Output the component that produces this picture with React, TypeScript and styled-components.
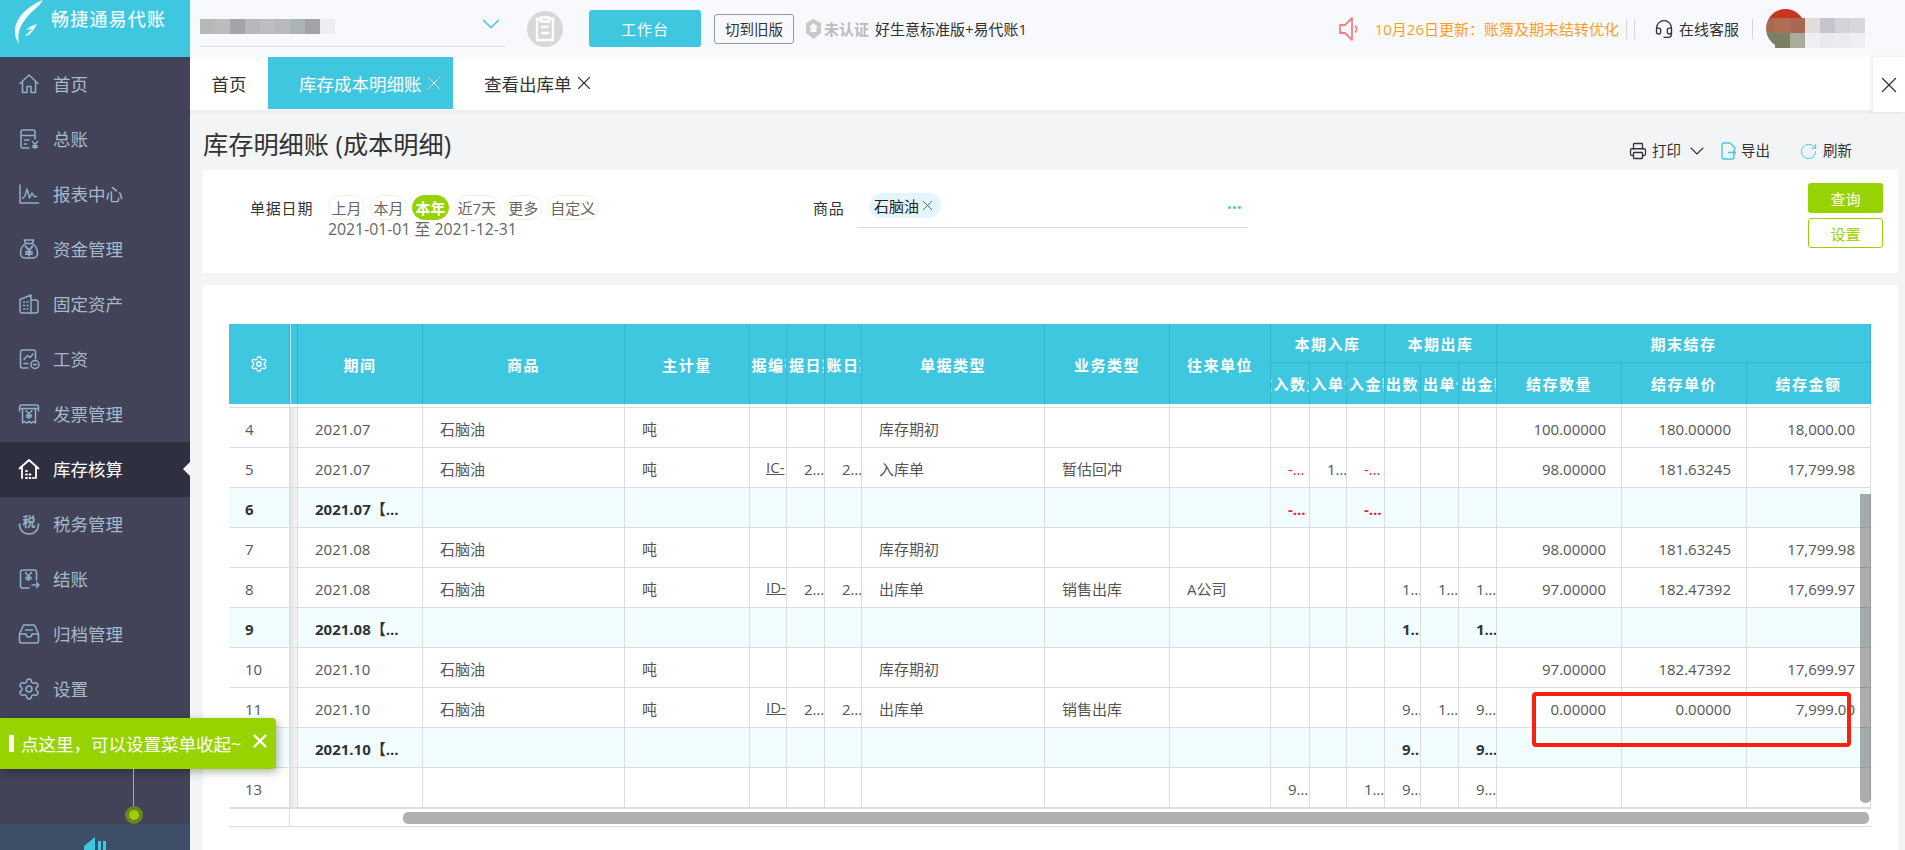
import React from "react";
import styled, { createGlobalStyle } from "styled-components";
import { Settings, X, ChevronDown, Printer, RotateCw, Headset } from "lucide-react";

const FONT = `"Open Sans", "Noto Sans CJK SC", "Noto Sans", sans-serif`;
const TEAL = "#3ec7df";
const GREEN = "#97d300";
const COLS = "61px 8px 125px 202px 125px 37px 38px 37px 183px 125px 101px 39px 37px 38px 36px 38px 38px 125px 125px 124px";

const Global = createGlobalStyle`
  html, body { margin: 0; padding: 0; background: #f2f4f6; overflow: hidden; }
  body { font-family: ${FONT}; color: #333; }
  * { box-sizing: border-box; }
`;

const Shell = styled.div`position: relative; display: flex; width: 1905px; height: 850px; overflow: hidden;`;
const Sidebar = styled.aside`width: 190px; height: 850px; flex: none; display: flex; flex-direction: column; background: #424358;`;
const LogoBar = styled.div`height: 57px; flex: none; background: ${TEAL}; display: flex; padding: 0 0 0 11px; color: #fff; overflow: hidden;`;
const LogoText = styled.span`font-size: 18px; font-weight: 500; letter-spacing: 1.2px; line-height: 39px; margin-left: 6px; white-space: nowrap; color: #eafaff;`;
const Menu = styled.nav`flex: 1; display: flex; flex-direction: column;`;
const MenuItem = styled.div<{ $active?: boolean }>`
  position: relative; height: 55px; flex: none; display: flex; align-items: center; gap: 12px; padding: 0 0 2px 17px;
  font-size: 17.5px; background: ${(p) => (p.$active ? "#2e303f" : "transparent")}; color: ${(p) => (p.$active ? "#fff" : "#a6bac8")};
  svg { color: ${(p) => (p.$active ? "#fff" : "#8fb0c8")}; }
`;
const ActiveArrow = styled.i`position: absolute; right: 0; top: 20px; border: 7px solid transparent; border-right-color: #f2f4f6; border-left-width: 0;`;
const CollapseBar = styled.div`height: 26px; flex: none; background: #3e4e66; display: flex; justify-content: center; overflow: hidden; padding: 13px 0 0 0;`;

const Main = styled.main`flex: 1; min-width: 0; display: flex; flex-direction: column;`;
const TopBar = styled.header`height: 57px; flex: none; background: #f8f9fd; display: flex; align-items: center; padding: 0 40px 0 10px;`;
const Select = styled.div`position: relative; width: 306px; height: 47px; align-self: flex-start; border-bottom: 1px solid #ddd; display: flex; padding-top: 19px;`;
const MosaicCell = styled.i<{ $c: string }>`display: block; width: 15px; height: 15px; background: ${(p) => p.$c};`;
const SelectChevron = styled.span`position: absolute; right: 0; top: 9px; color: ${TEAL}; display: flex;`;
const RoundIcon = styled.span`width: 36px; height: 36px; border-radius: 50%; background: #d8d8d8; margin-left: 21px; display: flex; align-items: center; justify-content: center; flex: none;`;
const BenchButton = styled.button`width: 112px; height: 37px; margin-left: 26px; border: 0; border-radius: 3px; background: ${TEAL}; color: #fff; font: 15px ${FONT}; letter-spacing: 1px; flex: none;`;
const OldButton = styled.button`width: 80px; height: 30px; margin-left: 13px; border: 1px solid #999; border-radius: 3px; background: transparent; color: #333; font: 14.5px ${FONT}; padding: 0; flex: none;`;
const Cert = styled.span`margin-left: 12px; display: flex; align-items: center; gap: 3px; color: #bcbcbc; font-size: 15px; font-weight: 700;`;
const Plan = styled.span`margin-left: 6px; font-size: 15px; color: #333; white-space: nowrap;`;
const TopRight = styled.div`margin-left: auto; display: flex; align-items: center;`;
const Notice = styled.span`margin-left: 16px; font-size: 15px; color: #ff9d1e; white-space: nowrap;`;
const VRule = styled.i<{ $gap: number }>`display: block; width: 1px; height: 20px; background: #d4d6da; margin-left: ${(p) => p.$gap}px;`;
const HeadsetSlot = styled.span`margin-left: 19px; display: flex;`;
const ServiceText = styled.span`margin-left: 5px; font-size: 15px; color: #333; white-space: nowrap;`;
const Avatar = styled.div`position: relative; width: 99px; height: 39px; margin-left: 13px;`;
const AvatarDisc = styled.div`width: 39px; height: 39px; border-radius: 50%; background: linear-gradient(#c8341f 0 22%, #a56a50 22% 58%, #7b7f64 58%);`;
const AvatarMosaic = styled.div`position: absolute; left: 9px; top: 9px; display: grid; grid-template-columns: repeat(6, 15px); grid-auto-rows: 15px;`;

const Tabs = styled.div`height: 56px; flex: none; background: #fff; display: flex; align-items: flex-start; border-bottom: 3px solid #eceef0;`;
const HomeTab = styled.div`width: 78px; height: 52px; display: flex; align-items: center; justify-content: center; font-size: 17.5px; color: #333;`;
const Tab = styled.div<{ $active?: boolean }>`
  height: 52px; display: flex; align-items: center; gap: 1px; font-size: 17.5px; white-space: nowrap;
  width: ${(p) => (p.$active ? "185px" : "auto")}; padding-left: 31px;
  background: ${(p) => (p.$active ? TEAL : "transparent")}; color: ${(p) => (p.$active ? "#fff" : "#333")};
`;
const CloseBox = styled.div`margin-left: auto; width: 32px; height: 55px; background: #fff; box-shadow: -2px 0 4px rgba(0, 0, 0, 0.08); display: flex; align-items: center; justify-content: center; position: relative; z-index: 1;`;

const Page = styled.div`flex: 1; min-height: 0; padding: 0 7px 0 13px; display: flex; flex-direction: column;`;
const TitleRow = styled.div`height: 57px; flex: none; display: flex; align-items: flex-start; padding-right: 46px;`;
const Title = styled.h1`margin: 14px 0 0; font-size: 25.2px; font-weight: 400; line-height: 34px; color: #333; white-space: nowrap;`;
const Tools = styled.div`margin-left: auto; margin-top: 26px; display: flex; align-items: center; font-size: 14.5px; color: #333; line-height: 22px;`;
const Tool = styled.span<{ $gap: number }>`display: flex; align-items: center; gap: 5px; margin-left: ${(p) => p.$gap}px; svg { flex: none; }`;

const FilterPanel = styled.section`height: 103px; flex: none; background: #fff; display: flex; align-items: flex-start;`;
const DateGroup = styled.div`width: 610px; flex: none; padding: 25px 0 0 47px; display: flex;`;
const FieldLabel = styled.label<{ $w: number }>`width: ${(p) => p.$w}px; flex: none; font-size: 15px; letter-spacing: 0.8px; line-height: 26px; color: #333;`;
const DateBody = styled.div`display: flex; flex-direction: column;`;
const Pills = styled.div`display: flex; gap: 5px;`;
const Pill = styled.span<{ $on?: boolean }>`
  height: 25px; padding: 0 2.5px; border-radius: 13px; font-size: 15px; line-height: 24px; white-space: nowrap;
  border: 1px solid ${(p) => (p.$on ? GREEN : "#eef3e0")};
  background: ${(p) => (p.$on ? GREEN : "#fff")}; color: ${(p) => (p.$on ? "#fff" : "#666")};
  font-weight: ${(p) => (p.$on ? 700 : 400)};
`;
const DateText = styled.span`font-size: 15.8px; line-height: 18px; color: #666; white-space: nowrap;`;
const ProductGroup = styled.div`display: flex; padding-top: 25px;`;
const ProductBox = styled.div`width: 391px; height: 35px; margin-top: -2px; border-bottom: 1px solid #ddd; display: flex; align-items: flex-start; justify-content: space-between; padding: 0 7px 0 12px;`;
const Tag = styled.span`height: 25px; width: 72px; border-radius: 13px; background: #e2f6fb; color: #222; font-size: 15px; line-height: 24px; display: flex; align-items: center; gap: 0; padding-left: 5px; white-space: nowrap;`;
const Dots = styled.span`display: flex; gap: 2px; margin-top: 13px; i { display: block; width: 3px; height: 3px; border-radius: 50%; background: ${TEAL}; }`;
const ActionCol = styled.div`margin-left: auto; padding: 13px 15px 0 0; display: flex; flex-direction: column; gap: 5px;`;
const QueryButton = styled.button`width: 75px; height: 30px; border: 0; border-radius: 3px; background: ${GREEN}; color: #fff; font: 15px ${FONT}; padding: 0;`;
const SetButton = styled.button`width: 75px; height: 30px; border: 1px solid ${GREEN}; border-radius: 3px; background: #fff; color: ${GREEN}; font: 15px ${FONT}; padding: 0;`;

const TablePanel = styled.section`flex: 1; min-height: 0; margin-top: 12px; background: #fff; padding: 39px 0 0 26px;`;
const TableWrap = styled.div`position: relative; width: 1642px; font-size: 15px; color: #555;`;
const HeadGrid = styled.div`display: grid; grid-template-columns: ${COLS}; grid-template-rows: 39px 41px; height: 80px; background: ${TEAL}; color: #fff;`;
const HeadCell = styled.div<{ $tall?: boolean; $group?: boolean }>`
  display: flex; align-items: center; justify-content: center; overflow: hidden; white-space: nowrap;
  font-size: 15px; font-weight: 700; letter-spacing: 1.5px;
  border-right: 1px solid rgba(0, 90, 110, 0.16);
  ${(p) => (p.$tall ? "grid-row: span 2;" : "")}
  ${(p) => (p.$group ? "grid-column: span 3; border-bottom: 1px solid rgba(0, 90, 110, 0.16);" : "")}
`;
const HeadShade = styled.div`grid-row: span 2; border-left: 1px solid #b7e6ef; border-right: 1px solid rgba(0, 90, 110, 0.2);`;
const Row = styled.div<{ $sum?: boolean }>`
  display: grid; grid-template-columns: ${COLS}; height: 40px; border-bottom: 1px solid #dddddd;
  background: ${(p) => (p.$sum ? "#f1fdff" : "#fff")}; font-weight: ${(p) => (p.$sum ? 700 : 400)};
  color: ${(p) => (p.$sum ? "#333" : "#555")};
`;
const GapRow = styled(Row)`height: 4px;`;
const Cell = styled.div<{ $kind?: "wide" | "narrow" | "num" | "id"; $red?: boolean }>`
  height: 39px; line-height: 43px; white-space: nowrap; overflow: hidden; text-overflow: ellipsis; border-right: 1px solid #dddddd; min-width: 0;
  color: ${(p) => (p.$red ? "#f5222d" : "inherit")};
  padding: ${(p) => (p.$kind === "num" ? "0 15px 0 0" : p.$kind === "narrow" ? "0 0 0 17px" : p.$kind === "id" ? "0 0 0 16px" : "0 17px")};
  text-align: ${(p) => (p.$kind === "num" ? "right" : "left")};
  ${(p) => (p.$kind === "id" ? "text-overflow: clip; line-height: 39px;" : "")}
  a { color: inherit; text-decoration: underline; }
`;
const RowNo = styled.div`height: 39px; line-height: 43px; padding-left: 16px; border-right: 1px solid #ddd;`;
const Shade = styled.div`height: 100%; border-right: 1px solid #ddd; background: linear-gradient(to right, #e3e3e3, #f6f6f6);`;
const TableFoot = styled.div`display: grid; grid-template-columns: 61px 1fr; height: 19px; border-top: 1px solid #ddd; border-bottom: 1px solid #ddd; position: relative;`;
const FootCell = styled.div`border-right: 1px solid #ddd;`;
const HScroll = styled.div`position: absolute; left: 174px; right: 2px; top: 3px; height: 12px; border-radius: 5px; background: #b0b0b0;`;
const VScroll = styled.div`position: absolute; right: 0; top: 170px; width: 11px; height: 309px; border-radius: 0 0 5px 5px; background: rgba(0, 0, 0, 0.32);`;
const RedMark = styled.div`position: absolute; left: 1303px; top: 368px; width: 319px; height: 55px; border: 4px solid #fa2010; border-radius: 4px; pointer-events: none;`;

const Guide = styled.div`position: absolute; left: 0; top: 718px; width: 276px; height: 51px; background: ${GREEN}; border-radius: 0 4px 4px 0; box-shadow: 2px 3px 9px rgba(0, 0, 0, 0.3); color: #fff; display: flex; align-items: center; padding-left: 9px; z-index: 5;`;
const GuideMark = styled.i`display: block; width: 5px; height: 17px; background: #fff; margin-right: 7px;`;
const GuideText = styled.span`font-size: 17.5px; white-space: nowrap;`;
const GuideClose = styled.span`position: absolute; left: 249px; top: 12px; display: flex;`;
const GuideStem = styled.i`position: absolute; left: 133px; top: 51px; width: 1px; height: 37px; background: ${GREEN};`;
const GuideDot = styled.i`position: absolute; left: 125px; top: 88px; width: 18px; height: 18px; border-radius: 50%; background: ${GREEN}; border: 4px solid #6b8420;`;

const Ic = ({ children, size = 24, sw = 1.5 }: { children: React.ReactNode; size?: number; sw?: number }) => (
  <svg width={size} height={size} viewBox="0 0 24 24" fill="none" stroke="currentColor" strokeWidth={sw} strokeLinecap="round" strokeLinejoin="round">
    {children}
  </svg>
);

const Yen = ({ x, y, s = 1 }: { x: number; y: number; s?: number }) => (
  <path transform={`translate(${x} ${y}) scale(${s})`} d="M-3 -4 L0 -0.5 L3 -4 M0 -0.5 V4 M-2.6 0.8 H2.6 M-2.6 2.6 H2.6" />
);

const icons: Record<string, React.ReactNode> = {
  home: <Ic><path d="M3 11.5 12 3l9 8.5M5.5 10v10.5h4.5V14.5h4v6h4.5V10" /></Ic>,
  ledger: <Ic><path d="M12 21H6a2 2 0 0 1-2-2V5a2 2 0 0 1 2-2h10a2 2 0 0 1 2 2v7M4 8.5h14M7.5 13H12M7.5 17h2" /><Yen x={18} y={18} s={0.9} /></Ic>,
  report: <Ic><path d="M3 3v18h18.5M5.5 16.5 8 14l2-7 2.5 9 2.5-5 2 3.5 2.5 0" /></Ic>,
  bag: <Ic><path d="M8.5 6.5 7.5 3h9l-1 3.5M8.5 6.5h7M8.5 6.5C5 9 3.5 12.5 3.5 16c0 3.5 2 5 5 5h7c3 0 5-1.5 5-5 0-3.5-1.5-7-5-9.5" /><Yen x={12} y={14} s={1.2} /></Ic>,
  assets: <Ic><path d="M3 7.5 14 3v18H5a2 2 0 0 1-2-2zM14 8h5a2 2 0 0 1 2 2v9a2 2 0 0 1-2 2h-5M6.5 10h1M10 10h1M6.5 13.5h1M10 13.5h1M6.5 17h1M10 17h1" /></Ic>,
  wages: <Ic><path d="M11 21H5.5a2 2 0 0 1-2-2V5a2 2 0 0 1 2-2h11a2 2 0 0 1 2 2v7M7 12.5l3.5-4 2.5 2 3-3.5M7 16.5h4" /><circle cx="18" cy="17.5" r="4" /><path d="M16.5 17.5h3" /></Ic>,
  invoice: <Ic><path d="M2.5 9V5a2 2 0 0 1 2-2h15a2 2 0 0 1 2 2v4M2.5 6.5h19M5.5 7v14l2-1.5 2 1.5 2.5-1.5 2.5 1.5 2-1.5 2 1.5V7" /><Yen x={12} y={12.5} s={1} /></Ic>,
  stock: <Ic sw={1.8}><path d="M2.5 11.5 12 3l9.5 8.5M5 10v11M19 10v11M9 14h1M9 17.5h1M12.5 17.5h1M9 21h1M12.5 21h1M16 21h1" /></Ic>,
  tax: (
    <svg width="24" height="24" viewBox="0 0 24 24" fill="none" stroke="currentColor" strokeWidth="1.6" strokeLinecap="round">
      <text x="12" y="14" textAnchor="middle" fontSize="13" fontWeight="700" fill="currentColor" stroke="none" fontFamily="Noto Sans CJK SC">税</text>
      <path d="M2.5 12c0 6 4 10 9.5 10s9.5-4 9.5-10" />
    </svg>
  ),
  close: <Ic><path d="M12 21H5.5a2 2 0 0 1-2-2V5a2 2 0 0 1 2-2h12a2 2 0 0 1 2 2v8M15 18h7M19.5 15.5 22 18l-2.5 2.5" /><Yen x={11.5} y={9.5} s={1} /></Ic>,
  archive: <Ic><path d="M6.5 3h11l4 9v7a2 2 0 0 1-2 2h-15a2 2 0 0 1-2-2v-7zM2.5 12h6.500a3 3 0 0 0 6 0h6.500M8.5 8h7" /></Ic>,
  settings: <Settings size={24} strokeWidth={1.5} />,
};

const menu: [string, string][] = [
  ["首页", "home"], ["总账", "ledger"], ["报表中心", "report"], ["资金管理", "bag"], ["固定资产", "assets"], ["工资", "wages"],
  ["发票管理", "invoice"], ["库存核算", "stock"], ["税务管理", "tax"], ["结账", "close"], ["归档管理", "archive"], ["设置", "settings"],
];

const selectMosaic = ["#b8b8b8", "#bcbcbc", "#a5a3a8", "#b8b8bb", "#bdbdc0", "#b9b8bf", "#a9b4b3", "#a3a2a8", "#eeeef2"];
const avatarMosaic = ["#b06f55", "#a66a54", "#e2ddd9", "#c5c5d0", "#d5d3d8", "#d8d8dc", "#7b7f64", "#a9ab9c", "#efeef0", "#e9e9ef", "#ecebf0", "#efeff3"];

type RowData = {
  n: number; sum?: boolean; period?: string; item?: string; doc?: string; date?: string; type?: string; biz?: string; party?: string;
  inQ?: string; inP?: string; inA?: string; outQ?: string; outP?: string; outA?: string; q?: string; p?: string; a?: string; red?: boolean;
};

const rows: RowData[] = [
  { n: 4, period: "2021.07", item: "石脑油", type: "库存期初", q: "100.00000", p: "180.00000", a: "18,000.00" },
  { n: 5, period: "2021.07", item: "石脑油", doc: "IC-", date: "2021-07-31", type: "入库单", biz: "暂估回冲", inQ: "-2.00000", inP: "100.00000", inA: "-200.02", q: "98.00000", p: "181.63245", a: "17,799.98", red: true },
  { n: 6, sum: true, period: "2021.07【小计】", inQ: "-2.00000", inA: "-200.02", red: true },
  { n: 7, period: "2021.08", item: "石脑油", type: "库存期初", q: "98.00000", p: "181.63245", a: "17,799.98" },
  { n: 8, period: "2021.08", item: "石脑油", doc: "ID-", date: "2021-08-31", type: "出库单", biz: "销售出库", party: "A公司", outQ: "1.00000", outP: "100.01", outA: "100.01", q: "97.00000", p: "182.47392", a: "17,699.97" },
  { n: 9, sum: true, period: "2021.08【小计】", outQ: "1.00000", outA: "100.01" },
  { n: 10, period: "2021.10", item: "石脑油", type: "库存期初", q: "97.00000", p: "182.47392", a: "17,699.97" },
  { n: 11, period: "2021.10", item: "石脑油", doc: "ID-", date: "2021-10-31", type: "出库单", biz: "销售出库", outQ: "97.00000", outP: "100.00", outA: "9,700.97", q: "0.00000", p: "0.00000", a: "7,999.00" },
  { n: 12, sum: true, period: "2021.10【小计】", outQ: "97.00000", outA: "9,700.97" },
  { n: 13, inQ: "98.00000", inA: "18,000.00", outQ: "98.00000", outA: "9,800.98" },
];

const subHeads = ["收入数量", "收入单价", "收入金额", "发出数量", "发出单价", "发出金额", "结存数量", "结存单价", "结存金额"];

const TableRow = ({ r }: { r: RowData }) => (
  <Row $sum={r.sum}>
    <RowNo>{r.n}</RowNo>
    <Shade />
    <Cell $kind="wide">{r.period}</Cell>
    <Cell $kind="wide">{r.item}</Cell>
    <Cell $kind="wide">{r.item ? "吨" : ""}</Cell>
    <Cell $kind="id">{r.doc ? <a>{r.doc}</a> : null}</Cell>
    <Cell $kind="narrow">{r.date}</Cell>
    <Cell $kind="narrow">{r.date}</Cell>
    <Cell $kind="wide">{r.type}</Cell>
    <Cell $kind="wide">{r.biz}</Cell>
    <Cell $kind="wide">{r.party}</Cell>
    <Cell $kind="narrow" $red={r.red}>{r.inQ}</Cell>
    <Cell $kind="narrow">{r.inP}</Cell>
    <Cell $kind="narrow" $red={r.red}>{r.inA}</Cell>
    <Cell $kind="narrow">{r.outQ}</Cell>
    <Cell $kind="narrow">{r.outP}</Cell>
    <Cell $kind="narrow">{r.outA}</Cell>
    <Cell $kind="num">{r.q}</Cell>
    <Cell $kind="num">{r.p}</Cell>
    <Cell $kind="num">{r.a}</Cell>
  </Row>
);

const EmptyRow = () => (
  <GapRow>
    {COLS.split(" ").map((_, i) => (
      <FootCell key={i} />
    ))}
  </GapRow>
);

export default function App() {
  return (
    <Shell>
      <Global />
      <Sidebar>
        <LogoBar>
          <svg width="34" height="44" viewBox="0 0 34 44" fill="#fff">
            <path d="M32 0C24 3 14 9 8 18 3 26 2 35 8 44 6 34 9 26 14 20 20 13 27 8 32 0Z" opacity="0.95" />
            <path d="M28 6C21 11 15 17 12 24c4-3 10-8 16-18Z" fill={TEAL} />
            <path d="M26 24c-4 1-8 3-11 6l6-1-7 7 4-1c3-3 6-7 8-11Z" opacity="0.9" />
          </svg>
          <LogoText>畅捷通易代账</LogoText>
        </LogoBar>
        <Menu>
          {menu.map(([label, key]) => (
            <MenuItem key={key} $active={key === "stock"}>
              {icons[key]}
              <span>{label}</span>
              {key === "stock" && <ActiveArrow />}
            </MenuItem>
          ))}
        </Menu>
        <CollapseBar>
          <svg width="22" height="13" viewBox="0 0 22 13" fill={TEAL}>
            <path d="M11 0v13H0l0-4z" />
            <rect x="14" y="4" width="3" height="9" />
            <rect x="19" y="4" width="3" height="9" />
          </svg>
        </CollapseBar>
      </Sidebar>

      <Main>
        <TopBar>
          <Select>
            {selectMosaic.map((c, i) => (
              <MosaicCell key={i} $c={c} />
            ))}
            <SelectChevron><ChevronDown size={30} strokeWidth={1.2} /></SelectChevron>
          </Select>
          <RoundIcon>
            <svg width="24" height="26" viewBox="0 0 24 26" fill="none" stroke="#fff" strokeWidth="2.4">
              <path d="M8 3H4v21h16V3h-4" />
              <path d="M8 1.5h8v4H8zM8 11h8M8 17h8" />
            </svg>
          </RoundIcon>
          <BenchButton>工作台</BenchButton>
          <OldButton>切到旧版</OldButton>
          <Cert>
            <svg width="15" height="20" viewBox="0 0 15 20" fill="#c8c8c8">
              <path d="M7.5 0 15 4v10l-7.5 6L0 14V4z" />
              <path d="M7.5 4 3 8h1.5v5h6V8H12z" fill="#f8f9fd" />
            </svg>
            未认证
          </Cert>
          <Plan>好生意标准版+易代账1</Plan>
          <TopRight>
            <svg width="20" height="24" viewBox="0 0 20 24" fill="none" stroke="#f98080" strokeWidth="1.8" strokeLinejoin="round">
              <path d="M1 8h5l7-7v22l-7-7H1zM16 8.5c2 2 2 5 0 7" />
            </svg>
            <Notice>{"10月26日更新\uFF1A账簿及期末结转优化"}</Notice>
            <VRule $gap={7} />
            <VRule $gap={7} />
            <HeadsetSlot><Headset size={20} strokeWidth={1.6} color="#333" /></HeadsetSlot>
            <ServiceText>在线客服</ServiceText>
            <VRule $gap={13} />
            <Avatar>
              <AvatarDisc />
              <AvatarMosaic>
                {avatarMosaic.map((c, i) => (
                  <MosaicCell key={i} $c={c} />
                ))}
              </AvatarMosaic>
            </Avatar>
          </TopRight>
        </TopBar>

        <Tabs>
          <HomeTab>首页</HomeTab>
          <Tab $active>
            库存成本明细账
            <X size={22} strokeWidth={1} />
          </Tab>
          <Tab>
            查看出库单
            <X size={22} strokeWidth={1.2} />
          </Tab>
          <CloseBox><X size={26} strokeWidth={1.2} color="#333" /></CloseBox>
        </Tabs>

        <Page>
          <TitleRow>
            <Title>库存明细账 (成本明细)</Title>
            <Tools>
              <Tool $gap={0}><Printer size={18} strokeWidth={1.7} />打印</Tool>
              <Tool $gap={4}><ChevronDown size={24} strokeWidth={1.1} /></Tool>
              <Tool $gap={12}>
                <svg width="15" height="18" viewBox="0 0 15 18" fill="none" stroke={TEAL} strokeWidth="1.3">
                  <path d="M9 1H3a2 2 0 0 0-2 2v12a2 2 0 0 0 2 2h8a2 2 0 0 0 2-2v-2M9 1l5 5M14 6v2M7 10.5h7.5M12 8l2.5 2.5L12 13" />
                </svg>
                导出
              </Tool>
              <Tool $gap={29}><RotateCw size={19} strokeWidth={1.2} color={TEAL} />刷新</Tool>
            </Tools>
          </TitleRow>

          <FilterPanel>
            <DateGroup>
              <FieldLabel $w={78}>单据日期</FieldLabel>
              <DateBody>
                <Pills>
                  <Pill>上月</Pill>
                  <Pill>本月</Pill>
                  <Pill $on>本年</Pill>
                  <Pill>近7天</Pill>
                  <Pill>更多</Pill>
                  <Pill>自定义</Pill>
                </Pills>
                <DateText>2021-01-01 至 2021-12-31</DateText>
              </DateBody>
            </DateGroup>
            <ProductGroup>
              <FieldLabel $w={44}>商品</FieldLabel>
              <ProductBox>
                <Tag>石脑油<X size={17} strokeWidth={1.3} color="#555" /></Tag>
                <Dots><i /><i /><i /></Dots>
              </ProductBox>
            </ProductGroup>
            <ActionCol>
              <QueryButton>查询</QueryButton>
              <SetButton>设置</SetButton>
            </ActionCol>
          </FilterPanel>

          <TablePanel>
            <TableWrap>
              <HeadGrid>
                <HeadCell $tall><Settings size={18} strokeWidth={1.8} /></HeadCell>
                <HeadShade />
                {["期间", "商品", "主计量", "单据编码", "单据日期", "记账日期", "单据类型", "业务类型", "往来单位"].map((t) => (
                  <HeadCell key={t} $tall>{t}</HeadCell>
                ))}
                {["本期入库", "本期出库", "期末结存"].map((t) => (
                  <HeadCell key={t} $group>{t}</HeadCell>
                ))}
                {subHeads.map((t) => (
                  <HeadCell key={t}>{t}</HeadCell>
                ))}
              </HeadGrid>
              <EmptyRow />
              {rows.map((r) => (
                <TableRow key={r.n} r={r} />
              ))}
              <TableFoot>
                <FootCell />
                <HScroll />
              </TableFoot>
              <VScroll />
              <RedMark />
            </TableWrap>
          </TablePanel>
        </Page>
      </Main>

      <Guide>
        <GuideMark />
        <GuideText>{"点这里\uFF0C可以设置菜单收起~"}</GuideText>
        <GuideClose><X size={22} strokeWidth={2.6} /></GuideClose>
        <GuideStem />
        <GuideDot />
      </Guide>
    </Shell>
  );
}
